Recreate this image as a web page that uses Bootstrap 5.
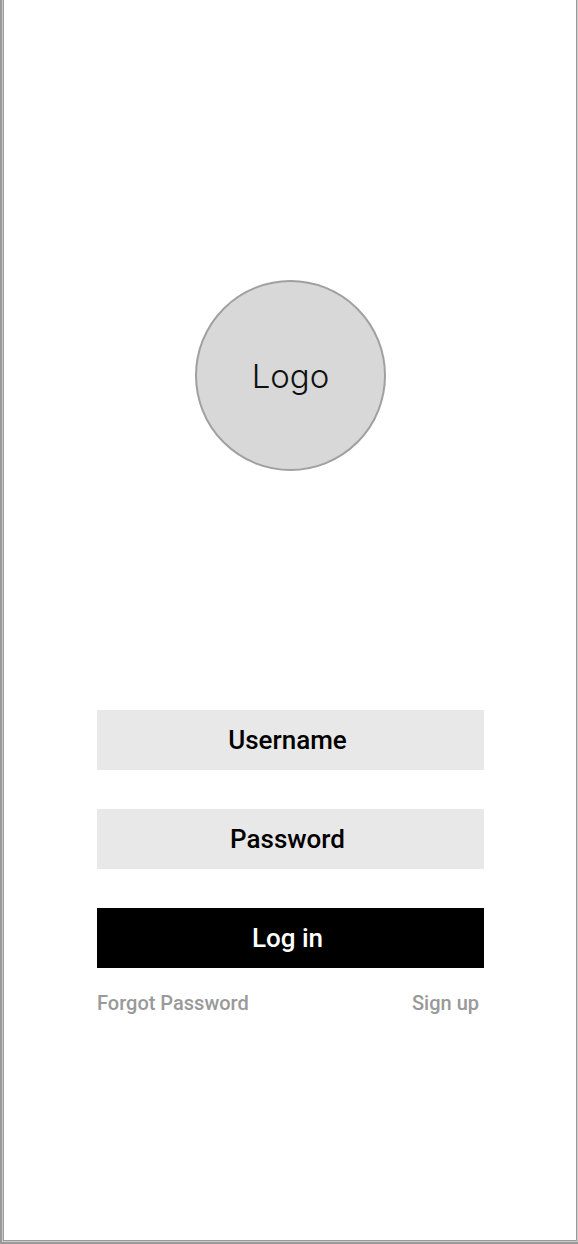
<!DOCTYPE html>
<html lang="en">
<head>
<meta charset="utf-8">
<meta name="viewport" content="width=device-width, initial-scale=1">
<title>Log in</title>
<link href="https://cdn.jsdelivr.net/npm/bootstrap@5.3.0/dist/css/bootstrap.min.css" rel="stylesheet">
<style>
body{font-family:Roboto,sans-serif;font-weight:500;background:#fff}
/* device frame: dark outer edge, light groove, thin inner line */
.frame{border:solid #999;border-width:0 0 2px 2px}
.groove{border:solid #ccc;border-width:0 1px 1px 1px}
.screen{border:solid #999;border-width:0 1px 1px 1px;padding:280px 92px 0 93px}
.logo{width:191px;height:191px;background:#d8d8d8;border:2px solid #a0a0a0;font:300 33px/40px Inter,sans-serif;color:#111}
.fields{margin-top:239px;gap:39px}
.field,.login{height:60px;border:0;border-radius:0;font-size:26px;line-height:36px;font-weight:500;text-align:center;padding:12px 16px 12px 10px}
.field,.field:focus{background:#e8e8e8;color:#000}
.field::placeholder{color:#000;opacity:1}
.login,.login:hover{background:#000;color:#fff}
.links{font-size:20px;line-height:28px;margin-top:21px;padding-right:5px}
.links a{color:#999;text-decoration:none}
</style>
</head>
<body>
<div class="frame d-flex min-vh-100">
<div class="groove d-flex flex-grow-1">
<main class="screen flex-grow-1">
<div class="logo rounded-circle d-flex align-items-center justify-content-center mx-auto">Logo</div>
<form>
<div class="fields d-flex flex-column">
<input class="field form-control" type="text" placeholder="Username" aria-label="Username">
<input class="field form-control" type="password" placeholder="Password" aria-label="Password">
<button class="login btn w-100" type="button">Log in</button>
</div>
<div class="links d-flex justify-content-between"><a href="#">Forgot Password</a><a href="#">Sign up</a></div>
</form>
</main>
</div>
</div>
<script src="https://cdn.jsdelivr.net/npm/bootstrap@5.3.0/dist/js/bootstrap.bundle.min.js"></script>
</body>
</html>
